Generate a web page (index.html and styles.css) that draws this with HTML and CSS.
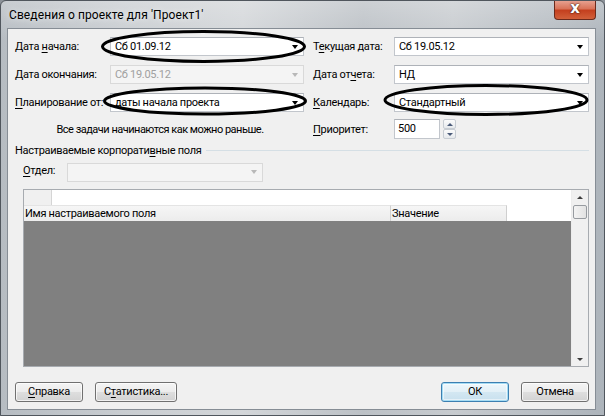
FILE: index.html
```html
<!DOCTYPE html>
<html lang="ru">
<head>
<meta charset="utf-8">
<title>Сведения о проекте</title>
<link rel="stylesheet" href="styles.css">
</head>
<body>
<div class="window">
  <div class="titlebar">
    <span class="title">Сведения о проекте для 'Проект1'</span>
    <div class="close"><span class="close-x">x</span></div>
  </div>
  <div class="client">
    <div class="form">
      <label class="lbl">Дата <u>н</u>ачала:</label>
      <div class="combo"><span>Сб 01.09.12</span><i class="arrow"></i></div>
      <label class="lbl lbl-r">Т<u>е</u>кущая дата:</label>
      <div class="combo"><span>Сб 19.05.12</span><i class="arrow"></i></div>

      <label class="lbl">Дата окончания:</label>
      <div class="combo disabled"><span>Сб 19.05.12</span><i class="arrow"></i></div>
      <label class="lbl lbl-r">Дата от<u>ч</u>ета:</label>
      <div class="combo"><span>НД</span><i class="arrow"></i></div>

      <label class="lbl"><u>П</u>ланирование от:</label>
      <div class="combo"><span>даты начала проекта</span><i class="arrow"></i></div>
      <label class="lbl lbl-r"><u>К</u>алендарь:</label>
      <div class="combo"><span>Стандартный</span><i class="arrow"></i></div>

      <div class="note row4">Все задачи начинаются как можно раньше.</div>
      <label class="lbl lbl-r row4"><u>П</u>риоритет:</label>
      <div class="spin row4">
        <div class="spin-box">500</div>
        <div class="spin-btns">
          <div class="spin-btn"><i class="tri-up"></i></div>
          <div class="spin-btn"><i class="tri-down"></i></div>
        </div>
      </div>
    </div>

    <div class="group">
      <span>Настраиваемые корпорати<u>в</u>ные поля</span>
      <div class="group-line"></div>
    </div>

    <div class="dept">
      <label class="lbl dept-lbl"><u>О</u>тдел:</label>
      <div class="combo disabled dept-combo"><span></span><i class="arrow"></i></div>
    </div>

    <div class="table">
      <div class="table-main">
        <div class="edit-row">
          <div class="edit-cell"></div>
          <div class="edit-input"></div>
        </div>
        <div class="head-row">
          <div class="hcell h-name">Имя настраиваемого поля</div>
          <div class="hcell h-val">Значение</div>
          <div class="hcell h-rest"></div>
        </div>
        <div class="table-body"></div>
      </div>
      <div class="vscroll">
        <div class="sb-btn"><i class="sb-up"></i></div>
        <div class="sb-thumb"></div>
        <div class="sb-track"></div>
        <div class="sb-btn"><i class="sb-down"></i></div>
      </div>
    </div>

    <div class="buttons">
      <button class="btn btn-help"><u>С</u>правка</button>
      <button class="btn btn-stat">С<u>т</u>атистика...</button>
      <span class="spacer"></span>
      <button class="btn btn-ok">ОК</button>
      <button class="btn btn-cancel">Отмена</button>
    </div>
  </div>

  <svg class="annot" width="605" height="416" viewBox="0 0 605 416">
    <ellipse cx="203.5" cy="46.5" rx="101" ry="15" />
    <ellipse cx="205" cy="101" rx="100.5" ry="13" />
    <ellipse cx="486" cy="100" rx="101" ry="14.5" />
  </svg>
</div>
</body>
</html>
```

FILE: styles.css
```css
html, body {
  margin: 0;
  padding: 0;
  background: #8c9299;
}

body {
  font-family: "Segoe UI", Roboto, "Noto Sans", sans-serif;
  font-size: 11px;
  letter-spacing: -0.3px;
  color: #000;
}

u {
  text-decoration: underline;
  text-underline-offset: 2px;
}

.window {
  position: relative;
  width: 605px;
  height: 416px;
  box-sizing: border-box;
  border: 1px solid #50565d;
  border-radius: 6px 6px 0 0;
  background:
    linear-gradient(180deg, rgba(255,255,255,0.25), rgba(255,255,255,0) 40px),
    linear-gradient(90deg, #b6bcc2 0%, #c9cdd1 20%, #d3d6d9 40%, #bcc1c6 60%, #c7cbcf 75%, #adb4bb 100%);
  display: flex;
  flex-direction: column;
  overflow: hidden;
}

.titlebar {
  height: 27px;
  display: flex;
  align-items: center;
  justify-content: space-between;
  flex-shrink: 0;
}

.title {
  padding-left: 8px;
  padding-top: 1px;
  font-size: 12px;
  letter-spacing: 0.1px;
  color: #000;
  text-shadow: 0 0 6px rgba(255,255,255,0.9);
}

.close {
  align-self: flex-start;
  margin-top: -1px;
  margin-right: 8px;
  width: 42px;
  height: 20px;
  box-sizing: border-box;
  border: 1px solid #6b2a1c;
  border-top: none;
  border-radius: 0 0 4px 4px;
  background: linear-gradient(180deg, #e9a696 0%, #d9745a 45%, #c4401f 55%, #d1603a 100%);
  display: flex;
  align-items: center;
  justify-content: center;
}

.close-x {
  font-family: "DejaVu Sans", sans-serif;
  font-weight: bold;
  font-size: 15px;
  letter-spacing: 0;
  line-height: 1;
  margin-top: -3px;
  color: #fff;
  text-shadow: 0 0 1px #3a1a10, 0 0 2px #3a1a10;
}

.client {
  margin: 0 8px 0 6px;
  height: 382px;
  box-sizing: border-box;
  border: 1px solid #868d95;
  background: #f0f0f0;
  display: flex;
  flex-direction: column;
  padding: 8px 6px 0 7px;
}

/* ---------- top form ---------- */
.form {
  display: grid;
  grid-template-columns: 95px 194px 90px 195px;
  grid-template-rows: 19px 19px 19px 20px;
  row-gap: 9px;
  align-items: center;
}

.lbl {
  white-space: nowrap;
  line-height: 15px;
}

.lbl-r {
  padding-left: 9px;
}

.combo {
  height: 19px;
  box-sizing: border-box;
  border: 1px solid #c2c6cc;
  border-top-color: #aeb2b8;
  background: #fff;
  display: flex;
  align-items: center;
  padding-left: 4px;
  white-space: nowrap;
}

.combo span {
  flex: 1;
  line-height: 15px;
}

.arrow {
  width: 0;
  height: 0;
  margin-right: 5px;
  border-left: 3.5px solid transparent;
  border-right: 3.5px solid transparent;
  border-top: 4px solid #000;
}

.combo.disabled {
  background: #f4f4f4;
  border-color: #d9d9d9;
  color: #a0a0a0;
}

.combo.disabled .arrow {
  border-top-color: #b8b8b8;
}

.row4 {
  margin-top: -4px;
}

.note {
  grid-column: 1 / 3;
  text-align: center;
  padding-left: 1px;
  letter-spacing: -0.5px;
}

.spin {
  display: flex;
  align-items: center;
  gap: 3px;
  height: 20px;
}

.spin-box {
  width: 46px;
  height: 20px;
  box-sizing: border-box;
  border: 1px solid #c2c6cc;
  border-top-color: #aeb2b8;
  background: #fff;
  padding-left: 3px;
  line-height: 18px;
}

.spin-btns {
  display: flex;
  flex-direction: column;
  height: 20px;
}

.spin-btn {
  width: 13px;
  height: 10px;
  box-sizing: border-box;
  border: 1px solid #c7ccd2;
  border-radius: 2px;
  background: linear-gradient(#fbfbfb, #e6e9ec);
  display: flex;
  align-items: center;
  justify-content: center;
}

.tri-up, .tri-down {
  width: 0;
  height: 0;
  border-left: 3px solid transparent;
  border-right: 3px solid transparent;
}

.tri-up {
  border-bottom: 3px solid #4a5a78;
}

.tri-down {
  border-top: 3px solid #4a5a78;
}

/* ---------- group ---------- */
.group {
  margin-top: 2px;
  display: flex;
  align-items: center;
  gap: 5px;
  height: 15px;
  line-height: 15px;
  white-space: nowrap;
}

.group-line {
  flex: 1;
  height: 1px;
  background: #d5dfe5;
}

.dept {
  margin-top: 5px;
  padding-left: 8px;
  display: flex;
  align-items: center;
  height: 18px;
}

.dept-lbl {
  width: 44px;
  margin-top: -4px;
}

.dept-combo {
  width: 196px;
  height: 19px;
}

/* ---------- table ---------- */
.table {
  margin-top: 8px;
  margin-left: 8px;
  width: 566px;
  height: 178px;
  box-sizing: border-box;
  border: 1px solid #a7abb0;
  display: flex;
  background: #fff;
}

.table-main {
  flex: 1;
  display: flex;
  flex-direction: column;
}

.edit-row {
  height: 15px;
  display: flex;
  flex-shrink: 0;
}

.edit-cell {
  width: 27px;
  background: #f0f0f0;
  border-right: 1px solid #d5d5d5;
}

.edit-input {
  flex: 1;
  background: #fff;
}

.head-row {
  height: 16px;
  display: flex;
  flex-shrink: 0;
  background: #fff;
}

.hcell {
  box-sizing: border-box;
  height: 16px;
  line-height: 15px;
  white-space: nowrap;
  overflow: hidden;
  padding-left: 1px;
}

.h-name {
  width: 367px;
  background: linear-gradient(#f6f6f6, #ececec);
  border-right: 1px solid #d0d0d0;
  border-top: 1px solid #e4e4e4;
}

.h-val {
  width: 116px;
  background: linear-gradient(#f6f6f6, #ececec);
  border-right: 1px solid #cfcfcf;
  border-top: 1px solid #e4e4e4;
}

.h-rest {
  flex: 1;
  background: #fff;
}

.table-body {
  flex: 1;
  background: #808080;
}

.vscroll {
  width: 16px;
  background: #f0f0f0;
  border-left: 1px solid #ececec;
  display: flex;
  flex-direction: column;
}

.sb-btn {
  height: 14px;
  display: flex;
  align-items: center;
  justify-content: center;
  flex-shrink: 0;
}

.sb-up {
  width: 0;
  height: 0;
  border-left: 3px solid transparent;
  border-right: 3px solid transparent;
  border-bottom: 3px solid #3d3d3d;
}

.sb-down {
  width: 0;
  height: 0;
  border-left: 3px solid transparent;
  border-right: 3px solid transparent;
  border-top: 3px solid #3d3d3d;
}

.sb-thumb {
  height: 14px;
  margin: 1px 1px 0 1px;
  box-sizing: border-box;
  border: 1px solid #979ba0;
  border-radius: 2px;
  background: linear-gradient(90deg, #f3f3f3, #e2e2e2);
  flex-shrink: 0;
}

.sb-track {
  flex: 1;
}

/* ---------- buttons ---------- */
.buttons {
  margin-top: 15px;
  display: flex;
  align-items: center;
  height: 20px;
}

.btn {
  height: 20px;
  box-sizing: border-box;
  border: 1px solid #707070;
  border-radius: 3px;
  background: linear-gradient(180deg, #f4f4f4 0%, #ececec 48%, #dedede 52%, #d2d2d2 100%);
  box-shadow: inset 0 0 0 1px rgba(255,255,255,0.7);
  font-family: "Segoe UI", Roboto, "Noto Sans", sans-serif;
  font-size: 11px;
  letter-spacing: -0.3px;
  color: #000;
  padding: 0;
  line-height: 16px;
  text-align: center;
}

.btn-help {
  width: 68px;
}

.btn-stat {
  width: 82px;
  margin-left: 12px;
}

.spacer {
  flex: 1;
}

.btn-ok {
  width: 68px;
  border-color: #3c7fb1;
  box-shadow: inset 0 0 0 1px #a5dcf4, inset 0 0 0 2px rgba(255,255,255,0.5);
  background: linear-gradient(180deg, #eef7fb 0%, #e3f0f7 48%, #d3e7f2 52%, #c8e0ee 100%);
}

.btn-cancel {
  width: 68px;
  margin-left: 12px;
}

/* ---------- annotation ellipses ---------- */
.annot {
  position: absolute;
  left: -1px;
  top: -1px;
  pointer-events: none;
}

.annot ellipse {
  fill: none;
  stroke: #000;
  stroke-width: 3;
}
```
